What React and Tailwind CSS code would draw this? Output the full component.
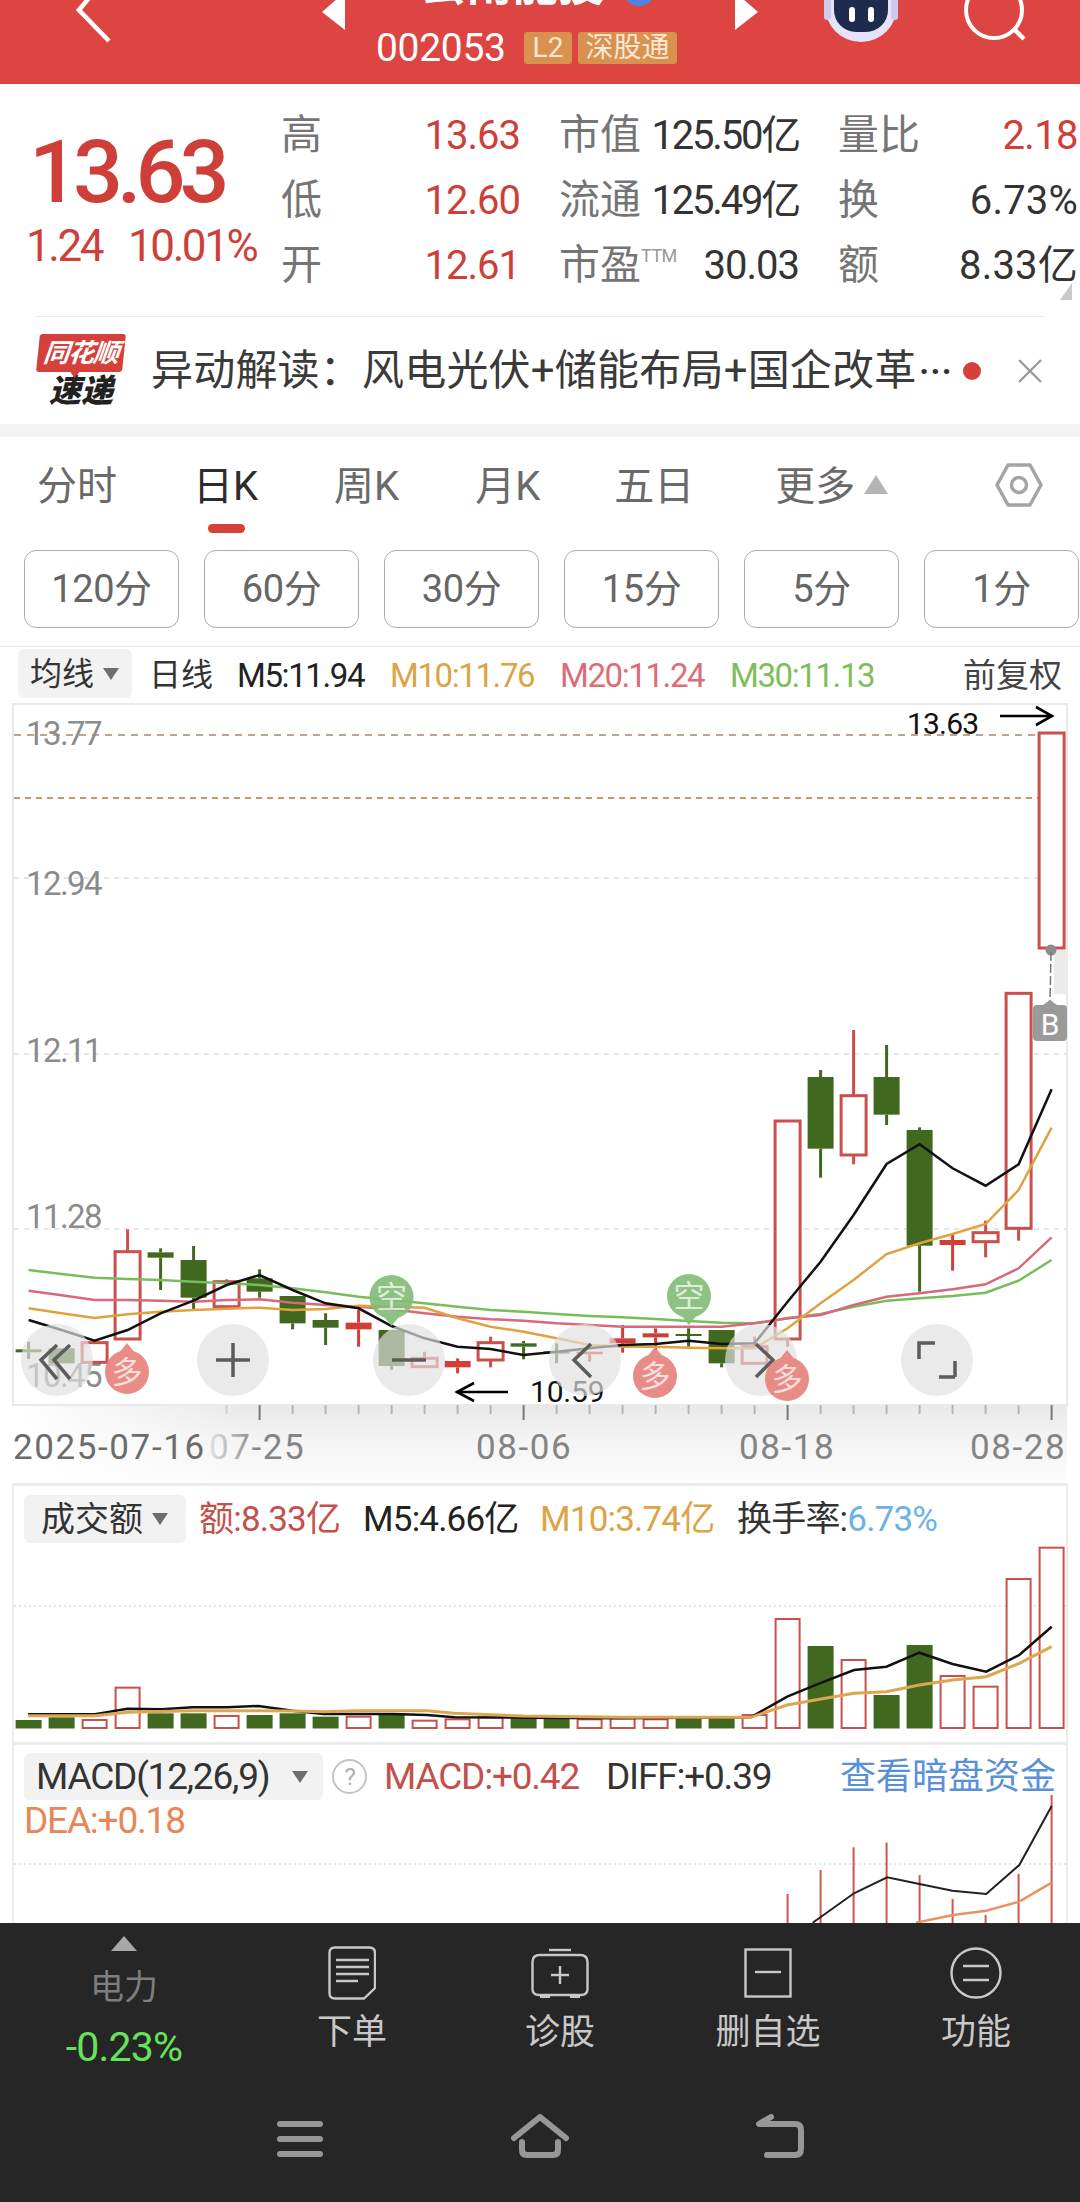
import React from 'react';

const X = (i) => 28.6 + 33 * i;
const Y = (z) => 960 + z / 3;
const pts = (arr) => arr.map((z, i) => `${X(i).toFixed(1)},${Y(z).toFixed(1)}`).join(' ');
const RED = '#c9504c';
const SOLID = '#d33d35';
const GREEN = '#41681f';

// [index, bodyTop, bodyBottom, wickTop, wickBottom, kind] in reference zoom units
const candles = [
  [0, 1168, 1177, 1145, 1197, 'g'],
  [1, 1165, 1210, 1165, 1210, 'g'],
  [2, 1148, 1207, 1148, 1207, 'h'],
  [3, 875, 1137, 808, 1137, 'h'],
  [4, 877, 893, 865, 990, 'g'],
  [5, 900, 1013, 858, 1047, 'g'],
  [6, 965, 1040, 958, 1040, 'h'],
  [7, 955, 995, 928, 1013, 'g'],
  [8, 1008, 1090, 1008, 1108, 'g'],
  [9, 1080, 1103, 1060, 1155, 'g'],
  [10, 1088, 1108, 1050, 1160, 'r'],
  [11, 1110, 1218, 1110, 1230, 'g'],
  [12, 1195, 1220, 1175, 1220, 'h'],
  [13, 1203, 1222, 1195, 1240, 'r'],
  [14, 1148, 1200, 1130, 1222, 'h'],
  [15, 1150, 1160, 1143, 1198, 'g'],
  [16, 1174, 1181, 1150, 1210, 'g'],
  [17, 1175, 1183, 1175, 1205, 'r'],
  [18, 1135, 1150, 1095, 1178, 'r'],
  [19, 1120, 1132, 1105, 1170, 'r'],
  [20, 1122, 1128, 1105, 1160, 'g'],
  [21, 1110, 1210, 1110, 1222, 'g'],
  [22, 1160, 1210, 1130, 1210, 'h'],
  [23, 483, 1137, 483, 1160, 'h'],
  [24, 351, 566, 330, 653, 'g'],
  [25, 407, 585, 210, 613, 'h'],
  [26, 351, 464, 255, 495, 'g'],
  [27, 510, 857, 502, 995, 'g'],
  [28, 840, 855, 825, 932, 'r'],
  [29, 818, 845, 782, 892, 'h'],
  [30, 100, 805, 100, 842, 'h'],
  [31, -681, -36, -681, -36, 'h'],
];

const ma5 = [1080,1110,1142,1110,1060,1022,975,945,990,1030,1045,1098,1135,1160,1167,1185,1175,1165,1155,1152,1142,1152,1150,1025,905,765,612,553,625,677,613,388];
const ma10 = [1045,1060,1074,1063,1055,1050,1046,1043,1050,1047,1037,1040,1043,1075,1100,1115,1135,1155,1160,1160,1163,1165,1165,1105,1030,960,882,850,822,792,690,503];
const ma20 = [992,1006,1020,1020,1022,1025,1020,1018,1028,1035,1040,1048,1060,1070,1078,1082,1090,1095,1100,1100,1100,1100,1090,1075,1065,1035,1010,1000,988,973,925,832];
const ma30 = [930,942,953,957,960,965,970,975,985,997,1010,1020,1030,1040,1050,1055,1062,1068,1072,1077,1083,1088,1090,1075,1062,1040,1022,1015,1008,998,962,900];

const volumes = [
  [750,'g'],[742,'g'],[750,'r'],[653,'r'],[730,'g'],[730,'g'],[738,'r'],[735,'g'],
  [730,'g'],[740,'g'],[740,'r'],[735,'g'],[752,'r'],[748,'r'],[742,'r'],[745,'g'],
  [745,'g'],[748,'r'],[745,'r'],[748,'r'],[745,'g'],[745,'g'],[735,'r'],[447,'r'],
  [528,'g'],[570,'r'],[675,'g'],[525,'g'],[618,'r'],[650,'r'],[327,'r'],[233,'r'],
];
const volBlack = [[41,733],[138,733],[185,716],[235,718],[280,712],[330,712],[375,708],[425,722],[470,732],[520,732],[570,732],[620,735],[660,742],[760,743],[900,745],[1090,742],[1143,680],[1190,640],[1240,600],[1287,590],[1335,548],[1383,582],[1432,605],[1480,555],[1527,470]];
const volOrange = [[41,737],[138,737],[185,727],[280,722],[375,722],[425,723],[470,725],[520,722],[620,722],[660,730],[760,738],[900,742],[1090,742],[1143,705],[1190,688],[1240,670],[1287,665],[1335,645],[1383,630],[1432,620],[1480,580],[1527,530]];
const volPts = (a) => a.map(([x, y]) => `${(x / 1.452).toFixed(1)},${(y / 3).toFixed(1)}`).join(' ');

const macdBars = [[23,492],[24,420],[25,352],[26,338],[27,435],[28,507],[29,555],[30,432],[31,195]];
const macdBlack = [[1180,578],[1240,490],[1288,442],[1335,462],[1383,482],[1432,492],[1480,405],[1527,228]];
const macdOrange = [[1330,578],[1384,555],[1432,542],[1480,515],[1527,458]];

function Candle({ c }) {
  const [i, t, b, wt, wb, k] = c;
  const x = X(i);
  const color = k === 'g' ? GREEN : k === 'r' ? SOLID : RED;
  const isHollow = k === 'h';
  return (
    <g>
      {Y(wt) < Y(t) && <line x1={x} x2={x} y1={Y(wt)} y2={Y(t)} stroke={color} strokeWidth="3" />}
      {Y(wb) > Y(b) && <line x1={x} x2={x} y1={Y(b)} y2={Y(wb)} stroke={color} strokeWidth="3" />}
      {isHollow ? (
        <rect x={x - 12.5} y={Y(t)} width="25" height={Y(b) - Y(t)} fill="#fff" stroke={color} strokeWidth="3" />
      ) : (
        <rect x={x - 13} y={Y(t)} width="26" height={Y(b) - Y(t)} fill={color} />
      )}
    </g>
  );
}

function Signal({ x, y, text, up }) {
  const fill = up ? '#e8837e' : '#84bd78';
  return (
    <g opacity="0.92">
      {up ? (
        <path d={`M${x} ${y - 29} L${x - 9} ${y - 18} L${x + 9} ${y - 18} Z`} fill={fill} />
      ) : (
        <path d={`M${x} ${y + 29} L${x - 9} ${y + 18} L${x + 9} ${y + 18} Z`} fill={fill} />
      )}
      <circle cx={x} cy={y} r="22" fill={fill} />
      <text x={x} y={y + 11} textAnchor="middle" fontSize="31" fill="#fff" opacity="0.72">{text}</text>
    </g>
  );
}

function RoundBtn({ x, children }) {
  return (
    <g>
      <circle cx={x} cy="1360" r="36" fill="#e0e0e0" fillOpacity="0.68" />
      <g fill="none" stroke="#5c5c5c" strokeWidth="3.5">{children}</g>
    </g>
  );
}

function MainChart() {
  const labelCls = { fontSize: 33, fill: '#8c8c8c', letterSpacing: '-1.6px' };
  return (
    <svg viewBox="0 703 1080 777" className="absolute inset-0 w-[1080px] h-[777px]">
      <defs>
        <linearGradient id="axisBg" x1="0" y1="0" x2="0" y2="1">
          <stop offset="0" stopColor="#e9e9e9" />
          <stop offset="0.5" stopColor="#f5f5f5" />
          <stop offset="1" stopColor="#fbfbfb" />
        </linearGradient>
        <linearGradient id="axisFade" x1="0" y1="0" x2="1" y2="0">
          <stop offset="0" stopColor="#fff" stopOpacity="1" />
          <stop offset="0.22" stopColor="#fff" stopOpacity="0" />
        </linearGradient>
        <linearGradient id="fade07" gradientUnits="userSpaceOnUse" x1="209" y1="0" x2="258" y2="0">
          <stop offset="0" stopColor="#e2e2e2" />
          <stop offset="1" stopColor="#848484" />
        </linearGradient>
      </defs>
      <rect x="14" y="1406" width="1053" height="74" fill="url(#axisBg)" />
      <rect x="14" y="1406" width="1053" height="74" fill="url(#axisFade)" />

      <line x1="14" x2="1040" y1="735" y2="735" stroke="#b9a88f" strokeWidth="2" strokeDasharray="7 6" />
      <line x1="14" x2="1066" y1="798" y2="798" stroke="#c09a70" strokeWidth="2" strokeDasharray="6 5" />
      {[878, 1054, 1229].map((y) => (
        <line key={y} x1="14" x2="1066" y1={y} y2={y} stroke="#dedede" strokeWidth="1.5" strokeDasharray="5 5" />
      ))}
      <rect x="1054" y="950" width="13" height="44" fill="#ebebeb" />

      <text x="26" y="745" style={labelCls}>13.77</text>
      <text x="26" y="895" style={labelCls}>12.94</text>
      <text x="26" y="1062" style={labelCls}>12.11</text>
      <text x="26" y="1228" style={labelCls}>11.28</text>
      <text x="26" y="1387" style={labelCls}>10.45</text>

      {candles.map((c) => <Candle key={c[0]} c={c} />)}

      <polyline points={pts(ma30)} fill="none" stroke="#78bd5c" strokeWidth="2.5" />
      <polyline points={pts(ma20)} fill="none" stroke="#d8687a" strokeWidth="2.5" />
      <polyline points={pts(ma10)} fill="none" stroke="#dfa23f" strokeWidth="2.5" />
      <polyline points={pts(ma5)} fill="none" stroke="#111" strokeWidth="2.5" />

      <Signal x={127} y={1372} text="多" up />
      <Signal x={391.5} y={1297} text="空" />
      <Signal x={689} y={1296} text="空" />
      <Signal x={655} y={1376} text="多" up />

      <circle cx="1051" cy="950" r="5.5" fill="#8c8c8c" />
      <line x1="1051" x2="1050" y1="952" y2="1002" stroke="#777" strokeWidth="1.5" strokeDasharray="9 3" />
      <path d="M1050 1000 L1043 1005 L1057 1005 Z" fill="#9a9a9a" />
      <rect x="1033" y="1005" width="34" height="36" rx="4" fill="#9a9a9a" />
      <text x="1050" y="1035" textAnchor="middle" fontSize="30" fill="#fff">B</text>

      <text x="907" y="734" fontSize="30" fill="#111" letterSpacing="-0.8">13.63</text>
      <path d="M1000 716 H1051 M1036 707 L1052 716 L1036 725" fill="none" stroke="#000" strokeWidth="2.6" />
      <path d="M508 1392 H457 M474 1383 L457 1392 L474 1401" fill="none" stroke="#000" strokeWidth="2.6" />
      <text x="530" y="1402" fontSize="30" fill="#111" letterSpacing="-0.2">10.59</text>

      <RoundBtn x={57}>
        <path d="M57 1345 L41 1360 L57 1379 M70 1345 L54 1360 L70 1379" />
      </RoundBtn>
      <RoundBtn x={233}>
        <path d="M216 1360 H250 M233 1343 V1377" />
      </RoundBtn>
      <RoundBtn x={409}>
        <path d="M392 1360 H426" />
      </RoundBtn>
      <RoundBtn x={585}>
        <path d="M591 1344 L574 1360 L591 1377" />
      </RoundBtn>
      <RoundBtn x={761}>
        <path d="M756 1344 L773 1360 L756 1377" />
      </RoundBtn>
      <RoundBtn x={937}>
        <path d="M919 1359 V1343 H935 M955 1377 H939 M955 1361 V1377" />
      </RoundBtn>
      <Signal x={787} y={1379} text="多" up />

      {Array.from({ length: 26 }, (_, k) => k + 6).map((i) => {
        const big = i === 7 || i === 15 || i === 23 || i === 31;
        return (
          <line key={i} x1={X(i)} x2={X(i)} y1="1405" y2={big ? 1420 : 1414} stroke={big ? '#777' : '#b5b5b5'} strokeOpacity={i === 6 ? 0.5 : 1} strokeWidth="2" />
        );
      })}

      <g style={{ fontSize: 35, letterSpacing: '1.6px' }}>
        <text x="13" y="1459" fill="#6c6c6c">2025-07-16</text>
        <text x="209" y="1459" fill="url(#fade07)">07-25</text>
        <text x="476" y="1459" fill="#848484">08-06</text>
        <text x="739" y="1459" fill="#848484">08-18</text>
        <text x="970" y="1459" fill="#848484">08-28</text>
      </g>
    </svg>
  );
}

function VolumeChart() {
  return (
    <svg viewBox="0 1470 1080 270" className="absolute inset-0 w-[1080px] h-[270px]">
      <g transform="translate(0 1470)">
        <line x1="14" x2="1066" y1="136" y2="136" stroke="#dedede" strokeWidth="1.5" strokeDasharray="2 3" />
        {volumes.map(([t, k], i) => {
          const top = t / 3;
          const x = X(i);
          return k === 'g' ? (
            <rect key={i} x={x - 13} y={top} width="26" height={258.5 - top} fill={GREEN} />
          ) : (
            <rect key={i} x={x - 12} y={top} width="24" height={258 - top} fill="#fff" stroke={RED} strokeWidth="2" />
          );
        })}
        <polyline points={volPts(volBlack)} fill="none" stroke="#111" strokeWidth="2.5" />
        <polyline points={volPts(volOrange)} fill="none" stroke="#dda650" strokeWidth="3" />
      </g>
    </svg>
  );
}

function MacdChart() {
  return (
    <svg viewBox="0 1730 1080 193" className="absolute inset-0 w-[1080px] h-[193px]">
      <g transform="translate(0 1730)">
        <line x1="14" x2="1066" y1="134" y2="134" stroke="#dedede" strokeWidth="1.5" strokeDasharray="2 3" />
        {macdBars.map(([i, t]) => (
          <line key={i} x1={X(i)} x2={X(i)} y1={t / 3} y2="193" stroke="#d0554c" strokeWidth="2" />
        ))}
        <polyline points={volPts(macdOrange)} fill="none" stroke="#e9935f" strokeWidth="2.5" />
        <polyline points={volPts(macdBlack)} fill="none" stroke="#222" strokeWidth="2" />
      </g>
    </svg>
  );
}

function Caret() {
  return (
    <svg width="18" height="14" viewBox="0 0 18 14" className="block">
      <path d="M1 1 H17 L9 13 Z" fill="#6e6e6e" />
    </svg>
  );
}

function QuoteCell({ label, value, valueCls }) {
  return (
    <div className="flex justify-between items-center h-[65px]">
      <span className="text-[41px] leading-none text-[#757575] flex items-start">{label}</span>
      <span className={`text-[40px] leading-none ${valueCls}`}>{value}</span>
    </div>
  );
}

function Chip({ text, w }) {
  return (
    <div className={`${w} h-[78px] border border-[#ababab] rounded-[12px] flex items-center justify-center text-[38px] leading-none text-[#666] tracking-[-0.4px]`}>
      {text}
    </div>
  );
}

function ToolItem({ icon, label }) {
  return (
    <div className="w-[208px] flex flex-col items-center">
      <div className="h-[54px] mt-[23px] flex items-center justify-center">{icon}</div>
      <div className="mt-[14px] text-[35px] leading-[38px] text-[#c8c8c8]">{label}</div>
    </div>
  );
}

export default function App() {
  return (
    <div className="w-[1080px] h-[2202px] overflow-hidden bg-white flex flex-col font-[Roboto,'Noto_Sans_CJK_SC',sans-serif]">
      {/* Header */}
      <header className="h-[84px] shrink-0 bg-[#dc4541] flex items-start text-white overflow-hidden">
        <svg width="36" height="44" viewBox="0 0 36 44" className="ml-[76px] shrink-0">
          <path d="M28 -20 L3 10 L33 41" fill="none" stroke="#fff" strokeWidth="4.5" />
        </svg>
        <svg width="23" height="32" viewBox="0 0 23 32" className="ml-[210px] shrink-0">
          <path d="M23 -8 L0 12 L23 30 Z" fill="#fff" />
        </svg>
        <div className="w-[390px] shrink-0 flex flex-col">
          <div className="h-[46px] -mt-[39px] pl-[75px] flex items-center">
            <span className="text-[46px] leading-none font-bold">云南能投</span>
            <span className="ml-[19px] w-[32px] h-[32px] mt-[12px] rounded-full bg-[#4a86e0]" />
          </div>
          <div className="mt-[25px] pl-[31px] flex items-center h-[32px]">
            <span className="w-[130px] text-[39px] leading-none tracking-[-0.3px]">002053</span>
            <span className="ml-[18px] w-[48px] h-[32px] rounded-[3px] bg-[#d8914f] flex items-center justify-center text-[28px] leading-none text-[#f9e8d6]">L2</span>
            <span className="ml-[6px] w-[99px] h-[32px] rounded-[3px] bg-[#d8914f] flex items-center justify-center text-[28px] leading-none text-[#f9e8d6]">深股通</span>
          </div>
        </div>
        <svg width="23" height="32" viewBox="0 0 23 32" className="shrink-0">
          <path d="M0 -8 L23 12 L0 30 Z" fill="#fff" />
        </svg>
        <svg width="76" height="44" viewBox="0 0 76 44" className="ml-[65px] shrink-0">
          <ellipse cx="38" cy="6" rx="36" ry="36" fill="#e6e3f8" />
          <rect x="1" y="-2" width="7" height="22" rx="3" fill="#cfcbee" />
          <rect x="68" y="-2" width="7" height="22" rx="3" fill="#cfcbee" />
          <rect x="11" y="-22" width="54" height="54" rx="22" fill="#1f2b4d" />
          <rect x="26" y="7" width="6" height="15" rx="3" fill="#fff" />
          <rect x="45" y="7" width="6" height="15" rx="3" fill="#fff" />
        </svg>
        <svg width="68" height="42" viewBox="0 0 68 42" className="ml-[64px] shrink-0">
          <circle cx="31" cy="10" r="28" fill="none" stroke="#fff" strokeWidth="4" />
          <path d="M50 28 L61 39" stroke="#fff" strokeWidth="4.5" />
        </svg>
      </header>

      {/* Quote */}
      <section className="h-[232px] shrink-0 relative flex items-start">
        <div className="w-[281px] shrink-0 pl-[26px] pt-[44px]">
          <div className="pl-[3px] text-[88px] leading-[88px] font-medium tracking-[-6px] text-[#cf3f3a]">13.63</div>
          <div className="mt-[8px] flex text-[#cf3f3a] text-[44px] leading-none tracking-[-2.4px] whitespace-nowrap">
            <span className="w-[102px]">1.24</span>
            <span>10.01%</span>
          </div>
        </div>
        <div className="pt-[19px] grid grid-cols-[239px_240px_240px] gap-x-[39px]">
          <QuoteCell label="高" value="13.63" valueCls="text-[#cf3f3a] tracking-[-1px]" />
          <QuoteCell label="市值" value="125.50亿" valueCls="text-[#333] tracking-[-2.2px]" />
          <QuoteCell label="量比" value="2.18" valueCls="text-[#cf3f3a] tracking-[-0.6px]" />
          <QuoteCell label="低" value="12.60" valueCls="text-[#cf3f3a] tracking-[-1px]" />
          <QuoteCell label="流通" value="125.49亿" valueCls="text-[#333] tracking-[-2.2px]" />
          <QuoteCell label="换" value="6.73%" valueCls="text-[#333] tracking-[0.2px]" />
          <QuoteCell label="开" value="12.61" valueCls="text-[#cf3f3a] tracking-[-1px]" />
          <QuoteCell
            label={<>市盈<span className="text-[18px] leading-[22px] text-[#999] tracking-[-0.5px]">TTM</span></>}
            value="30.03"
            valueCls="text-[#333] tracking-[-1px]"
          />
          <QuoteCell label="额" value="8.33亿" valueCls="text-[#333] tracking-[0.2px]" />
        </div>
        <svg width="12" height="17" viewBox="0 0 12 17" className="absolute right-[8px] bottom-[16px]">
          <path d="M12 0 V17 H0 Z" fill="#c9c9c9" />
        </svg>
      </section>

      <div className="mx-[36px] h-[1px] shrink-0 bg-[#ececec]" />

      {/* News ticker */}
      <section className="h-[107px] shrink-0 flex items-center">
        <div className="ml-[37px] w-[88px] shrink-0 flex flex-col items-center">
          <div className="relative w-[86px] h-[38px] bg-[#d6403a] rounded-[3px] -skew-x-6 flex items-center justify-center">
            <span className="text-[26px] leading-none font-bold italic text-white tracking-[-1px] whitespace-nowrap">同花顺</span>
            <span className="absolute left-[33px] top-[36px] w-[12px] h-[8px] bg-[#d6403a] [clip-path:polygon(0_0,100%_0,50%_100%)]" />
          </div>
          <div className="mt-[4px] text-[32px] leading-[31px] font-black italic text-[#222] whitespace-nowrap">速递</div>
        </div>
        <div className="ml-[26px] w-[772px] shrink-0 text-[42px] leading-none tracking-[0.2px] text-[#3a3a3a] whitespace-nowrap">异动解读：风电光伏+储能布局+国企改革</div>
        <div className="-ml-[4px] w-[39px] text-[34px] leading-none text-[#333] font-bold whitespace-nowrap tracking-[1px]">···</div>
        <div className="ml-[5px] w-[18px] h-[18px] rounded-full bg-[#d6403a] shrink-0" />
        <svg width="24" height="24" viewBox="0 0 24 24" className="ml-[37px] shrink-0">
          <path d="M1 1 L23 23 M23 1 L1 23" stroke="#9a9a9a" strokeWidth="2.4" />
        </svg>
      </section>

      <div className="h-[13px] shrink-0 bg-[#f4f4f4]" />

      {/* Period tabs */}
      <nav className="h-[75px] shrink-0 flex items-center pt-[24px] text-[40px] leading-none text-[#6a6a6a]">
        <span className="ml-[37px]">分时</span>
        <span className="ml-[76px] text-[#2c2c2c]">日K</span>
        <span className="ml-[76px]">周K</span>
        <span className="ml-[76px]">月K</span>
        <span className="ml-[74px]">五日</span>
        <span className="ml-[81px]">更多</span>
        <svg width="24" height="19" viewBox="0 0 24 19" className="ml-[9px] mb-[4px]">
          <path d="M12 0 L24 19 H0 Z" fill="#b4b4b4" />
        </svg>
        <svg width="50" height="46" viewBox="0 0 50 46" className="ml-[106px] mb-[4px]">
          <path d="M14 3 H36 L47 23 L36 43 H14 L3 23 Z" fill="none" stroke="#a4a4a4" strokeWidth="3.5" strokeLinejoin="round" />
          <circle cx="25" cy="23" r="7.5" fill="none" stroke="#a4a4a4" strokeWidth="3.5" />
        </svg>
      </nav>
      <div className="ml-[208px] mt-[12px] w-[37px] h-[9px] shrink-0 rounded-full bg-[#d6403a]" />

      {/* Minute chips */}
      <div className="mt-[17px] pl-[24px] flex gap-[25px] shrink-0">
        <Chip text="120分" w="w-[155px]" />
        <Chip text="60分" w="w-[155px]" />
        <Chip text="30分" w="w-[155px]" />
        <Chip text="15分" w="w-[155px]" />
        <Chip text="5分" w="w-[155px]" />
        <Chip text="1分" w="w-[155px]" />
      </div>

      <div className="mt-[18px] h-[1px] shrink-0 bg-[#e8e8e8]" />

      {/* MA legend */}
      <div className="h-[56px] shrink-0 flex items-center text-[33px] leading-none tracking-[-1.4px] whitespace-nowrap">
        <div className="ml-[18px] w-[114px] h-[49px] mt-[-3px] rounded-[6px] bg-[#f2f2f2] flex items-center justify-center gap-[8px] text-[#333] tracking-normal text-[32px]">
          <span>均线</span><Caret />
        </div>
        <span className="ml-[17px] w-[88px] text-[#333] tracking-normal text-[32px]">日线</span>
        <span className="w-[153px] text-[#222]">M5:11.94</span>
        <span className="w-[170px] text-[#dba445]">M10:11.76</span>
        <span className="w-[170px] text-[#de6b78]">M20:11.24</span>
        <span className="w-[233px] text-[#7fbd5a]">M30:11.13</span>
        <span className="tracking-normal text-[#444] text-[33px]">前复权</span>
      </div>

      {/* Main chart */}
      <section className="relative h-[777px] shrink-0">
        <div className="mx-[12px] h-[703px] border-2 border-[#e9e9e9]" />
        <MainChart />
      </section>

      {/* Volume */}
      <section className="relative h-[262px] shrink-0">
        <div className="absolute inset-x-0 -top-[10px] h-[270px]">
          <VolumeChart />
        </div>
        <div className="relative mx-[12px] mt-[3px] h-[259px] border-t-[3px] border-x-2 border-[#ececec] pt-[9px] pl-[10px] flex items-start text-[35px] leading-none tracking-[-0.8px] whitespace-nowrap">
          <div className="w-[162px] h-[48px] rounded-[6px] bg-[#f2f2f2] flex items-center justify-center gap-[8px] text-[#333] text-[34px] tracking-normal">
            <span>成交额</span><Caret />
          </div>
          <div className="h-[48px] flex items-center">
            <span className="ml-[13px] w-[164px] text-[#c4504c]">额:8.33亿</span>
            <span className="w-[177px] text-[#222]">M5:4.66亿</span>
            <span className="w-[197px] text-[#dba445]">M10:3.74亿</span>
            <span className="text-[#333]">换手率:</span>
            <span className="text-[#6cb2e3]">6.73%</span>
          </div>
        </div>
      </section>

      {/* MACD */}
      <section className="relative h-[181px] shrink-0 overflow-hidden">
        <div className="absolute inset-x-0 top-[-12px] h-[193px]">
          <MacdChart />
        </div>
        <div className="relative mx-[12px] h-[181px] border-t-[3px] border-x-2 border-[#ececec] pt-[8px] pl-[10px] text-[37px] leading-none tracking-[-1.2px] whitespace-nowrap">
          <div className="flex items-center">
            <div className="w-[299px] h-[47px] rounded-[6px] bg-[#f2f2f2] flex items-center justify-between pl-[12px] pr-[14px] text-[#333]">
              <span>MACD(12,26,9)</span><Caret />
            </div>
            <span className="ml-[9px] w-[35px] h-[35px] rounded-full border-2 border-[#c4c4c4] text-[#b0b0b0] text-[24px] flex items-center justify-center">?</span>
            <span className="ml-[17px] w-[222px] text-[#c4504c]">MACD:+0.42</span>
            <span className="w-[234px] text-[#333]">DIFF:+0.39</span>
            <span className="text-[36px] tracking-normal text-[#5a90d8]">查看暗盘资金</span>
          </div>
          <div className="mt-[2px] text-[#e6875a]">DEA:+0.18</div>
        </div>
      </section>

      {/* Bottom toolbar */}
      <footer className="flex-1 bg-[#262626] flex flex-col">
        <div className="flex h-[176px]">
          <div className="w-[248px] flex flex-col items-center">
            <svg width="26" height="15" viewBox="0 0 26 15" className="mt-[13px]">
              <path d="M13 0 L26 15 H0 Z" fill="#a8a8a8" />
            </svg>
            <div className="mt-[17px] text-[34px] leading-[38px] text-[#7e7e7e]">电力</div>
            <div className="mt-[19px] text-[41px] leading-[44px] tracking-[-0.8px] text-[#66e35c]">-0.23%</div>
          </div>
          <ToolItem
            label="下单"
            icon={
              <svg width="48" height="54" viewBox="0 0 48 54" fill="none" stroke="#c8c8c8" strokeWidth="2.4">
                <path d="M7 1.5 H41 Q47 1.5 47 7 V42 L36 52.5 H7 Q1.5 52.5 1.5 47 V7 Q1.5 1.5 7 1.5 Z" />
                <path d="M8 14 H41 M8 21 H41 M8 28 H41 M8 35 H30" />
              </svg>
            }
          />
          <ToolItem
            label="诊股"
            icon={
              <svg width="58" height="50" viewBox="0 0 58 50" fill="none" stroke="#c8c8c8" strokeWidth="2.4">
                <path d="M18 2 H40" />
                <path d="M9 7 H49 Q56.5 7 56.5 14 V41 Q56.5 47 50 47 H8 Q1.5 47 1.5 41 V14 Q1.5 7 9 7 Z" />
                <path d="M29 18 V36 M20 27 H38" />
                <path d="M9 49 H19 M39 49 H49" strokeWidth="3.5" />
              </svg>
            }
          />
          <ToolItem
            label="删自选"
            icon={
              <svg width="48" height="50" viewBox="0 0 48 50" fill="none" stroke="#c8c8c8" strokeWidth="2.4">
                <rect x="1.5" y="1.5" width="45" height="47" />
                <path d="M11 24 H37" />
              </svg>
            }
          />
          <ToolItem
            label="功能"
            icon={
              <svg width="52" height="52" viewBox="0 0 52 52" fill="none" stroke="#c8c8c8" strokeWidth="2.4">
                <circle cx="26" cy="26" r="24.5" />
                <path d="M13 19 H39 M13 33 H39" />
              </svg>
            }
          />
        </div>
        <div className="flex items-start pl-[277px] mt-[15px]">
          <svg width="46" height="36" viewBox="0 0 46 36" className="mt-[7px]" stroke="#979797" strokeWidth="6" strokeLinecap="round">
            <path d="M3 3 H43 M3 18 H43 M3 33 H43" />
          </svg>
          <svg width="58" height="44" viewBox="0 0 58 44" fill="none" stroke="#979797" strokeWidth="6" strokeLinecap="round" strokeLinejoin="round" className="ml-[188px]">
            <path d="M3 24 L29 3 L55 24" />
            <path d="M11 28 V36 Q11 41 16 41 H42 Q47 41 47 36 V28" />
          </svg>
          <svg width="48" height="44" viewBox="0 0 48 44" fill="none" stroke="#979797" strokeWidth="6" strokeLinecap="round" strokeLinejoin="round" className="ml-[187px]">
            <path d="M15 3 L3 10 H39 Q45 10 45 16 V35 Q45 41 39 41 H11" />
          </svg>
        </div>
      </footer>
    </div>
  );
}
